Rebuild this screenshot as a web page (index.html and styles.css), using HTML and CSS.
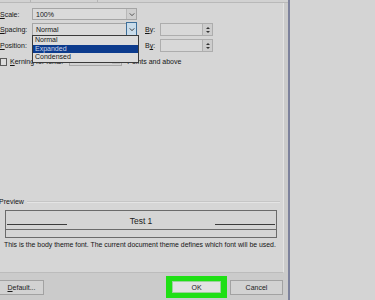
FILE: index.html
```html
<!DOCTYPE html>
<html lang="en">
<head>
  <meta charset="UTF-8" />
  <meta name="viewport" content="width=device-width, initial-scale=1.0"/>
  <title>Font - Advanced</title>
  <link rel="stylesheet" href="styles.css">
</head>
<body>
  <div class="screen">
    <div class="dialog">
      <div class="tabs">
        <span class="tab"></span>
        <span class="tab"></span>
      </div>

      <div class="panel">
        <div class="form">
          <label class="lbl"><u>S</u>cale:</label>
          <div class="select">
            <span class="value">100%</span>
            <span class="drop"><svg viewBox="0 0 8 6" width="6" height="5"><path d="M1 1.5 L4 4.5 L7 1.5" fill="none" stroke="#444" stroke-width="1.2"/></svg></span>
          </div>
          <span></span>
          <span></span>

          <label class="lbl"><u>S</u>pacing:</label>
          <div class="select open">
            <span class="value">Normal</span>
            <span class="drop"><svg viewBox="0 0 8 6" width="6" height="5"><path d="M1 1.5 L4 4.5 L7 1.5" fill="none" stroke="#222" stroke-width="1.2"/></svg></span>
            <ul class="list">
              <li>Normal</li>
              <li class="selected">Expanded</li>
              <li>Condensed</li>
            </ul>
          </div>
          <label class="lbl by"><u>B</u>y:</label>
          <div class="spin">
            <span class="spin-field"></span>
            <span class="spin-btn"><i class="up"></i><i class="down"></i></span>
          </div>

          <label class="lbl"><u>P</u>osition:</label>
          <div class="select">
            <span class="value"></span>
            <span class="drop"><svg viewBox="0 0 8 6" width="6" height="5"><path d="M1 1.5 L4 4.5 L7 1.5" fill="none" stroke="#444" stroke-width="1.2"/></svg></span>
          </div>
          <label class="lbl by">B<u>y</u>:</label>
          <div class="spin">
            <span class="spin-field"></span>
            <span class="spin-btn"><i class="up"></i><i class="down"></i></span>
          </div>

          <div class="kerning">
            <span class="check"></span>
            <span class="lbl"><u>K</u>erning for fonts:</span>
            <span class="small-select"><span class="mini-drop"></span></span>
            <span class="lbl points">Points and above</span>
          </div>
        </div>

        <div class="preview">
          <div class="legend">
            <span>Preview</span>
            <span class="rule"></span>
          </div>
          <div class="preview-box">
            <div class="sample">
              <span class="seg"></span>
              <span class="sample-text">Test 1</span>
              <span class="seg"></span>
            </div>
          </div>
          <p class="note">This is the body theme font. The current document theme defines which font will be used.</p>
        </div>
      </div>

      <div class="footer">
        <button class="btn default"><u>D</u>efault...</button>
        <span class="spacer"></span>
        <span class="highlight"><button class="btn ok">OK</button></span>
        <button class="btn cancel">Cancel</button>
      </div>
    </div>
    <div class="backdrop"></div>
  </div>
</body>
</html>
```

FILE: styles.css
```css
body {
  margin: 0;
  font-family: "Liberation Sans", Arial, sans-serif;
  font-size: 7px;
  color: #151515;
  background: #d3d3d3;
}
u { text-decoration-thickness: 1px; }
.screen {
  display: flex;
  width: 375px;
  height: 300px;
  overflow: hidden;
}
.dialog {
  width: 288px;
  height: 300px;
  flex-shrink: 0;
  display: flex;
  flex-direction: column;
  background: #cbcbcb;
  border-right: 2px solid #7d829c;
}
.backdrop { flex: 1; background: #d4d4d4; }

.tabs {
  height: 2px;
  display: flex;
  gap: 66px;
  padding-left: 30px;
  border-bottom: 1px solid #b9b9b9;
  background: #d2d2d2;
}
.tab { width: 1px; background: #b5b5b5; }

.panel {
  width: 283px;
  height: 269px;
  background: #d6d6d6;
  border-right: 1px solid #e4e4e4;
  border-bottom: 1px solid #bcbcbc;
  display: flex;
  flex-direction: column;
}

/* form */
.form {
  display: grid;
  grid-template-columns: 32px 105px 23px 53px;
  grid-template-rows: 12px 13px 13px;
  row-gap: 3px;
  padding-top: 5px;
  align-items: center;
}
.lbl { white-space: nowrap; }
.by { padding-left: 8px; }
.select {
  position: relative;
  height: 100%;
  box-sizing: border-box;
  border: 1px solid #a5a5a5;
  background: #dadada;
  display: flex;
  align-items: center;
}
.select .value { flex: 1; padding-left: 3px; }
.drop {
  width: 9px;
  height: 100%;
  display: flex;
  align-items: center;
  justify-content: center;
  border-left: 1px solid #b8b8b8;
  background: #cfcfcf;
}
.open .drop {
  background: #c9dcea;
  border: 1px solid #3d6f9a;
  margin: -1px -1px -1px 0;
  height: calc(100% + 2px);
}
.list {
  position: absolute;
  left: -1px;
  top: 100%;
  width: 105px;
  margin: 0;
  padding: 0;
  list-style: none;
  background: #dcdcdc;
  border: 1px solid #3a3a3a;
  z-index: 5;
}
.list li {
  height: 8.5px;
  line-height: 8.5px;
  padding-left: 2px;
}
.list .selected { background: #0c3b8d; color: #cfd8ea; }

.spin {
  height: 100%;
  box-sizing: border-box;
  border: 1px solid #adadad;
  background: #d8d8d8;
  display: flex;
}
.spin-field { flex: 1; }
.spin-btn {
  width: 9px;
  border-left: 1px solid #b0b0b0;
  background: #cdcdcd;
  display: flex;
  flex-direction: column;
  align-items: center;
  justify-content: center;
  gap: 2px;
}
.spin-btn i {
  width: 0;
  height: 0;
  border-left: 2px solid transparent;
  border-right: 2px solid transparent;
}
.spin-btn .up { border-bottom: 2px solid #333; }
.spin-btn .down { border-top: 2px solid #333; }

.kerning {
  grid-column: 1 / -1;
  display: flex;
  align-items: center;
  gap: 3px;
  height: 9px;
  margin-top: 2px;
}
.check {
  width: 7px;
  height: 8px;
  box-sizing: border-box;
  border: 1px solid #5a5a5a;
  background: #dcdcdc;
}
.small-select {
  width: 53px;
  height: 9px;
  box-sizing: border-box;
  border: 1px solid #a8a8a8;
  background: #d2d2d2;
  margin-left: 3px;
  display: flex;
  justify-content: flex-end;
  padding: 1px;
}
.mini-drop {
  width: 8px;
  background: #bdbdbd;
  position: relative;
}
.mini-drop::after {
  content: "";
  position: absolute;
  left: 2px;
  top: 2px;
  border-left: 2px solid transparent;
  border-right: 2px solid transparent;
  border-top: 2px solid #222;
}
.points { margin-left: 2px; }

/* preview */
.preview {
  margin-top: auto;
  padding-bottom: 24px;
}
.legend {
  display: flex;
  align-items: center;
  gap: 3px;
  margin-left: -1px;
  margin-bottom: 5px;
}
.legend .rule {
  flex: 1;
  height: 1px;
  background: #c6c6c6;
  border-bottom: 1px solid #e4e4e4;
  margin-right: 3px;
}
.preview-box {
  margin: 0 6px 0 5px;
  height: 28px;
  box-sizing: border-box;
  border: 1px solid #6b6b6b;
  background: #d5d5d5;
}
.sample {
  height: 19px;
  border-bottom: 1px solid #6b6b6b;
  display: flex;
  align-items: flex-end;
  justify-content: space-between;
  padding: 0 1px 3px;
  box-sizing: border-box;
}
.seg { width: 60px; height: 1px; background: #3c3c3c; margin-bottom: 1px; }
.sample-text {
  font-size: 8.5px;
  line-height: 10px;
  color: #222;
}
.note {
  margin: 3px 0 0 4px;
  font-size: 6.9px;
  white-space: nowrap;
}

/* footer */
.footer {
  flex: 1;
  display: flex;
  align-items: center;
  padding: 1px 5px 0 0;
}
.btn {
  font-family: inherit;
  font-size: 7px;
  color: #1c1c1c;
  border: 1px solid #a2a2a2;
  background: #d2d2d2;
  padding: 0;
  height: 15px;
}
.default { width: 45px; margin-left: -1px; }
.spacer { flex: 1; }
.highlight {
  display: flex;
  padding: 5px 6px;
  background: #1fe015;
  margin-right: 3px;
}
.ok {
  width: 49px;
  height: 12px;
  background: #e2e2e2;
  border-color: #9bd29a;
}
.cancel { width: 53px; }
```
